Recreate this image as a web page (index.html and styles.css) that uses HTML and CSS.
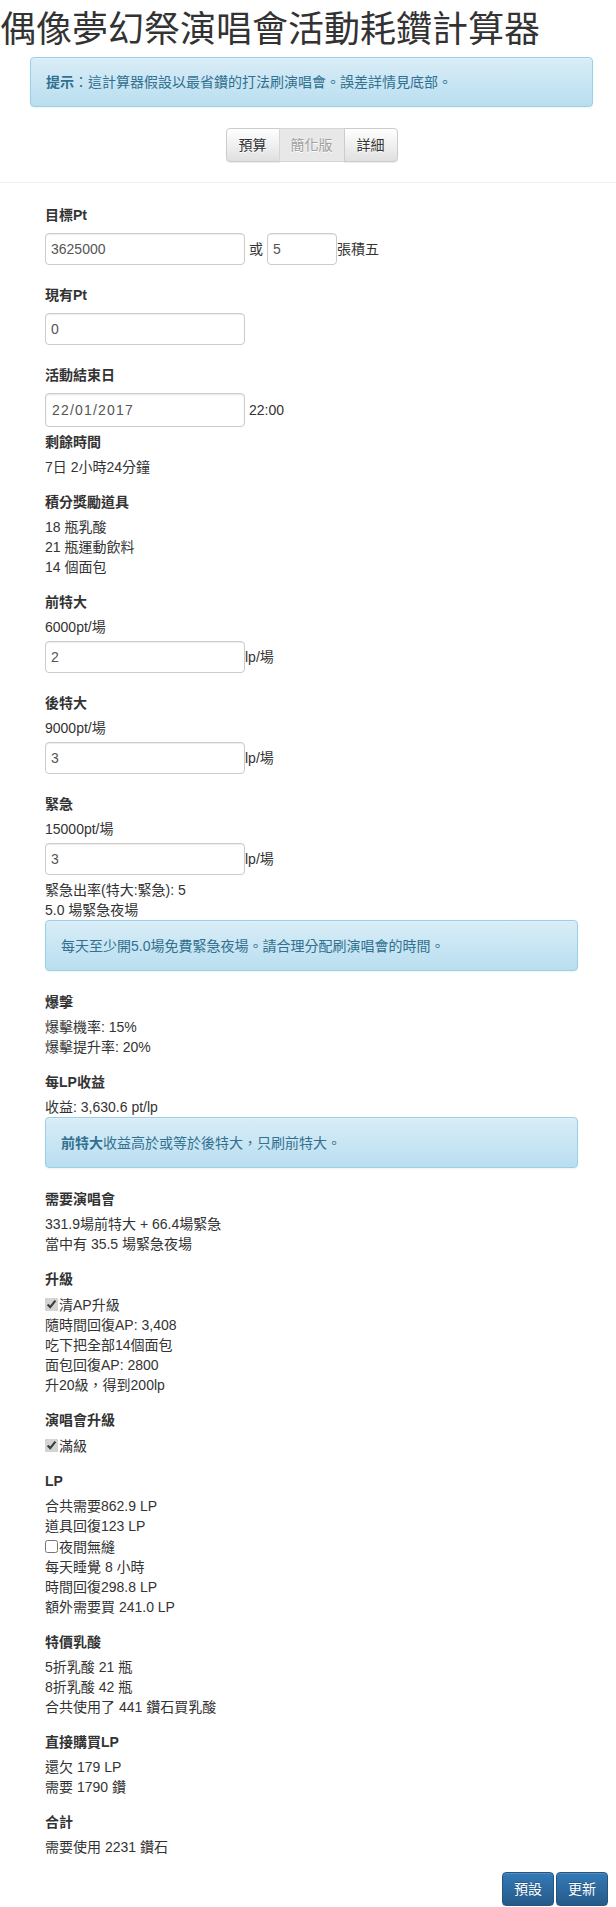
FILE: index.html
```html
<!DOCTYPE html>
<html lang="zh-Hant">
<head>
<meta charset="utf-8">
<title>偶像夢幻祭演唱會活動耗鑽計算器</title>
<link rel="stylesheet" href="styles.css">
</head>
<body>
<h1 class="title">偶像夢幻祭演唱會活動耗鑽計算器</h1>
<div class="top">
  <div class="alert"><b>提示</b>：這計算器假設以最省鑽的打法刷演唱會。誤差詳情見底部。</div>
  <div class="seg">
    <span class="seg-btn first">預算</span>
    <span class="seg-btn active">簡化版</span>
    <span class="seg-btn last">詳細</span>
  </div>
</div>
<hr class="rule">
<div class="content">
  <div class="group">
    <div class="label">目標Pt</div>
    <div class="row after-label">
      <input class="field" type="text" value="3625000">
      <span class="or">或</span>
      <input class="field small" type="text" value="5">
      <span>張積五</span>
    </div>
  </div>
  <div class="group">
    <div class="label">現有Pt</div>
    <div class="row after-label">
      <input class="field" type="text" value="0">
    </div>
  </div>
  <div class="group">
    <div class="label">活動結束日</div>
    <div class="row after-label">
      <input class="field date" type="text" value="22/01/2017">
      <span class="time">22:00</span>
    </div>
    <div class="label">剩餘時間</div>
    <div class="line">7日 2小時24分鐘</div>
  </div>
  <div class="group">
    <div class="label">積分獎勵道具</div>
    <div class="line">18 瓶乳酸</div>
    <div class="line">21 瓶運動飲料</div>
    <div class="line">14 個面包</div>
  </div>
  <div class="group">
    <div class="label">前特大</div>
    <div class="line">6000pt/場</div>
    <div class="row after-text">
      <input class="field" type="text" value="2"><span>lp/場</span>
    </div>
  </div>
  <div class="group">
    <div class="label">後特大</div>
    <div class="line">9000pt/場</div>
    <div class="row after-text">
      <input class="field" type="text" value="3"><span>lp/場</span>
    </div>
  </div>
  <div class="group">
    <div class="label">緊急</div>
    <div class="line">15000pt/場</div>
    <div class="row after-text">
      <input class="field" type="text" value="3"><span>lp/場</span>
    </div>
    <div class="line">緊急出率(特大:緊急): 5</div>
    <div class="line">5.0 場緊急夜場</div>
    <div class="alert inner">每天至少開5.0場免費緊急夜場。請合理分配刷演唱會的時間。</div>
  </div>
  <div class="group">
    <div class="label">爆擊</div>
    <div class="line">爆擊機率: 15%</div>
    <div class="line">爆擊提升率: 20%</div>
  </div>
  <div class="group">
    <div class="label">每LP收益</div>
    <div class="line">收益: 3,630.6 pt/lp</div>
    <div class="alert inner">
      <b>前特大</b>收益高於或等於後特大，只刷前特大。</div>
  </div>
  <div class="group">
    <div class="label">需要演唱會</div>
    <div class="line">331.9場前特大 + 66.4場緊急</div>
    <div class="line">當中有 35.5 場緊急夜場</div>
  </div>
  <div class="group">
    <div class="label">升級</div>
    <label class="check"><input type="checkbox" checked>清AP升級</label>
    <div class="line">隨時間回復AP: 3,408</div>
    <div class="line">吃下把全部14個面包</div>
    <div class="line">面包回復AP: 2800</div>
    <div class="line">升20級，得到200lp</div>
  </div>
  <div class="group">
    <div class="label">演唱會升級</div>
    <label class="check"><input type="checkbox" checked>滿級</label>
  </div>
  <div class="group">
    <div class="label">LP</div>
    <div class="line">合共需要862.9 LP</div>
    <div class="line">道具回復123 LP</div>
    <label class="check"><input type="checkbox">夜間無縫</label>
    <div class="line">每天睡覺 8 小時</div>
    <div class="line">時間回復298.8 LP</div>
    <div class="line">額外需要買 241.0 LP</div>
  </div>
  <div class="group">
    <div class="label">特價乳酸</div>
    <div class="line">5折乳酸 21 瓶</div>
    <div class="line">8折乳酸 42 瓶</div>
    <div class="line">合共使用了 441 鑽石買乳酸</div>
  </div>
  <div class="group">
    <div class="label">直接購買LP</div>
    <div class="line">還欠 179 LP</div>
    <div class="line">需要 1790 鑽</div>
  </div>
  <div class="group">
    <div class="label">合計</div>
    <div class="line">需要使用 2231 鑽石</div>
  </div>
</div>
<div class="actions">
  <span class="btn-primary">預設</span>
  <span class="btn-primary">更新</span>
</div>
</body>
</html>
```
FILE: styles.css
```css
html, body {
  margin: 0;
  padding: 0;
  background: #fff;
}
body {
  font-family: "Liberation Sans", "Noto Sans CJK TC", sans-serif;
  font-size: 14px;
  line-height: 20px;
  color: #333;
}
.title {
  margin: 6px 0 11px 0;
  font-family: "Noto Sans CJK TC", sans-serif;
  font-size: 36px;
  line-height: 40px;
  font-weight: 400;
  color: #333;
  white-space: nowrap;
}
.top {
  margin: 0 23px 0 30px;
}
.alert {
  padding: 14px 15px;
  border: 1px solid #9acfea;
  border-radius: 4px;
  background: linear-gradient(to bottom, #d9edf7 0%, #b9def0 100%);
  color: #31708f;
  box-shadow: inset 0 1px 0 rgba(255,255,255,.25), 0 1px 2px rgba(0,0,0,.05);
  line-height: 20px;
}
.alert b {
  font-weight: 700;
}
.alert.inner {
  padding: 15px 15px 14px;
  margin-bottom: 6px;
}
.seg {
  display: flex;
  justify-content: center;
  margin-top: 21px;
}
.seg-btn {
  display: block;
  padding: 6px 12px;
  line-height: 20px;
  border: 1px solid #ccc;
  background: linear-gradient(to bottom, #fff 0%, #e0e0e0 100%);
  text-shadow: 0 1px 0 #fff;
  color: #333;
  box-shadow: inset 0 1px 0 rgba(255,255,255,.15), 0 1px 1px rgba(0,0,0,.075);
}
.seg-btn + .seg-btn {
  margin-left: -1px;
}
.seg-btn.first {
  border-radius: 4px 0 0 4px;
}
.seg-btn.last {
  border-radius: 0 4px 4px 0;
}
.seg-btn.active {
  background: #e8e8e8;
  color: #a0a0a0;
  border-color: #d6d6d6;
  box-shadow: none;
  padding: 6px 11px;
}
.rule {
  margin: 20px 0 0;
  border: 0;
  border-top: 1px solid #eee;
  height: 0;
}
.content {
  padding: 22px 38px 0 45px;
}
.group {
  padding-bottom: 15px;
}
.label {
  font-weight: 700;
  line-height: 20px;
  margin-bottom: 5px;
}
.line {
  line-height: 20px;
}
.row {
  display: flex;
  align-items: center;
  margin-bottom: 5px;
}
.row.after-label {
  margin-top: 8px;
}
.row.after-text {
  margin-top: 4px;
}
.field {
  box-sizing: border-box;
  width: 200px;
  height: 32px;
  margin: 0;
  padding: 0 5px;
  border: 1px solid #ccc;
  border-radius: 4px;
  font-family: "Liberation Sans", "Noto Sans CJK TC", sans-serif;
  font-size: 14px;
  color: #555;
  background: #fff;
  box-shadow: inset 0 1px 1px rgba(0,0,0,.075);
  outline: none;
}
.field.small {
  width: 70px;
}
.field.date {
  height: 34px;
  padding-left: 6px;
  letter-spacing: 1.2px;
  box-shadow: inset 0 1px 2px rgba(0,0,0,.1);
}
.or {
  margin: 0 4px;
}
.time {
  margin-left: 4px;
}
.check {
  display: flex;
  align-items: center;
  height: 21px;
}
.check input {
  width: 13px;
  height: 13px;
  margin: 0 1px 0 0;
  accent-color: #d4d4d4;
}
.actions {
  display: flex;
  justify-content: flex-end;
  gap: 2px;
  padding-right: 8px;
}
.btn-primary {
  display: block;
  padding: 6px 11px;
  line-height: 20px;
  border: 1px solid #245580;
  border-radius: 4px;
  background: linear-gradient(to bottom, #337ab7 0%, #265a88 100%);
  color: #fff;
  text-shadow: 0 -1px 0 rgba(0,0,0,.2);
  box-shadow: inset 0 1px 0 rgba(255,255,255,.15), 0 1px 1px rgba(0,0,0,.075);
}
```
